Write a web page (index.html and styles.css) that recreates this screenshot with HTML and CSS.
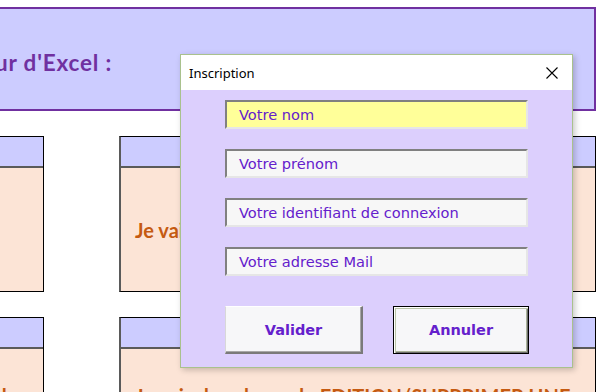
FILE: index.html
```html
<!DOCTYPE html>
<html lang="fr">
<head>
<meta charset="utf-8">
<title>Inscription</title>
<link rel="stylesheet" href="styles.css">
</head>
<body>
<div class="banner">
  <div class="banner-title"><span>Bienvenue utilisateur d'Excel :</span></div>
</div>

<div class="cards">
  <div class="card">
    <div class="card-head"></div>
    <div class="card-body"></div>
  </div>
  <div class="card">
    <div class="card-head"></div>
    <div class="card-body center"><span class="card-text">Je vais vous inscrire</span></div>
  </div>
  <div class="card">
    <div class="card-head"></div>
    <div class="card-body low right"><span class="card-text">Mode modifiable,</span></div>
  </div>
  <div class="card">
    <div class="card-head"></div>
    <div class="card-body low"><span class="card-text">Je suis dans le mode EDITION/SUPPRIMER UNE</span></div>
  </div>
</div>

<div class="dialog">
  <div class="dialog-title">
    <span>Inscription</span>
    <svg class="close" width="12" height="12" viewBox="0 0 12 12"><path d="M0.5 0.5 L11.5 11.5 M11.5 0.5 L0.5 11.5" stroke="#000" stroke-width="1.1" fill="none"/></svg>
  </div>
  <div class="dialog-body">
    <div class="field active">Votre nom</div>
    <div class="field">Votre prénom</div>
    <div class="field">Votre identifiant de connexion</div>
    <div class="field">Votre adresse Mail</div>
    <div class="buttons">
      <div class="btn">Valider</div>
      <div class="btn default">Annuler</div>
    </div>
  </div>
</div>
</body>
</html>
```

FILE: styles.css
```css
html, body {
  margin: 0;
  padding: 0;
  background: #ffffff;
  width: 600px;
  height: 392px;
  overflow: hidden;
}

.banner {
  margin-top: 7px;
  width: 596px;
  height: 104px;
  box-sizing: border-box;
  background: #ccccff;
  border: 2px solid #7030a0;
  border-left: none;
  display: flex;
  align-items: center;
}

.banner-title {
  width: 112px;
  overflow: hidden;
  display: flex;
  justify-content: flex-end;
  white-space: nowrap;
  padding-top: 6px;
  font-family: Lato, "Liberation Sans", sans-serif;
  font-weight: 700;
  font-size: 22.5px;
  letter-spacing: 0.8px;
  color: #7030a0;
}

.cards {
  margin-top: 25px;
  margin-left: -56px;
  display: grid;
  grid-template-columns: 100px 477px;
  column-gap: 75px;
  row-gap: 25px;
}

.card {
  height: 156px;
  box-sizing: border-box;
  border: 1px solid #000;
  border-left: 2px solid #5a5a5a;
  display: flex;
  flex-direction: column;
  overflow: hidden;
}

.card-head {
  height: 29px;
  background: #ccccff;
  border-bottom: 2px solid #5a5a5a;
  flex: none;
}

.card-body {
  flex: 1;
  background: #fce4d6;
  display: flex;
  padding-left: 14px;
  white-space: nowrap;
  overflow: hidden;
}

.card-body.center {
  align-items: center;
}

.card-body.low {
  align-items: flex-start;
  padding-top: 35px;
}

.card-body.right {
  justify-content: flex-end;
  padding-left: 0;
  padding-right: 21px;
}

.card-text {
  font-family: Lato, "Liberation Sans", sans-serif;
  font-weight: 700;
  font-size: 20px;
  color: #c55a11;
}

.dialog {
  position: absolute;
  left: 180px;
  top: 54px;
  width: 393px;
  height: 314px;
  box-sizing: border-box;
  border: 1px solid #a9c18d;
  background: #dccffd;
  box-shadow: 2px 2px 6px rgba(0, 0, 0, 0.22);
  display: flex;
  flex-direction: column;
}

.dialog-title {
  height: 34px;
  flex: none;
  background: #ffffff;
  display: flex;
  align-items: center;
  justify-content: space-between;
  padding: 1px 14px 0 8px;
  font-family: "Noto Sans", "DejaVu Sans", sans-serif;
  font-size: 13px;
  color: #000;
}

.close {
  display: block;
}

.dialog-body {
  padding: 10px 0 0 44px;
  display: flex;
  flex-direction: column;
  gap: 20px;
}

.field {
  width: 303px;
  height: 29px;
  box-sizing: border-box;
  background: #f7f7f7;
  border-top: 2px solid #808080;
  border-left: 2px solid #808080;
  border-right: 2px solid #e6e6e6;
  border-bottom: 2px solid #e6e6e6;
  padding-left: 12px;
  display: flex;
  align-items: center;
  font-family: "DejaVu Sans", Verdana, sans-serif;
  font-size: 14.6px;
  color: #6420cc;
  white-space: nowrap;
}

.field.active {
  background: #ffff99;
}

.buttons {
  margin-top: 10px;
  display: flex;
  gap: 30px;
}

.btn {
  width: 138px;
  height: 48px;
  box-sizing: border-box;
  background: #f7f7f9;
  border-top: 1px solid #ffffff;
  border-left: 1px solid #d8d8d8;
  border-right: 2px solid #7a7a7a;
  border-bottom: 2px solid #7a7a7a;
  box-shadow: inset -1px -1px 0 #a8a8a8;
  display: flex;
  align-items: center;
  justify-content: center;
  font-family: "DejaVu Sans", Verdana, sans-serif;
  font-weight: 700;
  font-size: 14.5px;
  color: #6420cc;
}

.btn.default {
  width: 136px;
  border: 1px solid #000000;
  box-shadow: inset 1px 1px 0 #ffffff, inset 2px 2px 0 #b9c4a8, inset -1px -1px 0 #6d6d6d, inset -2px -2px 0 #a9b29a;
}
```
